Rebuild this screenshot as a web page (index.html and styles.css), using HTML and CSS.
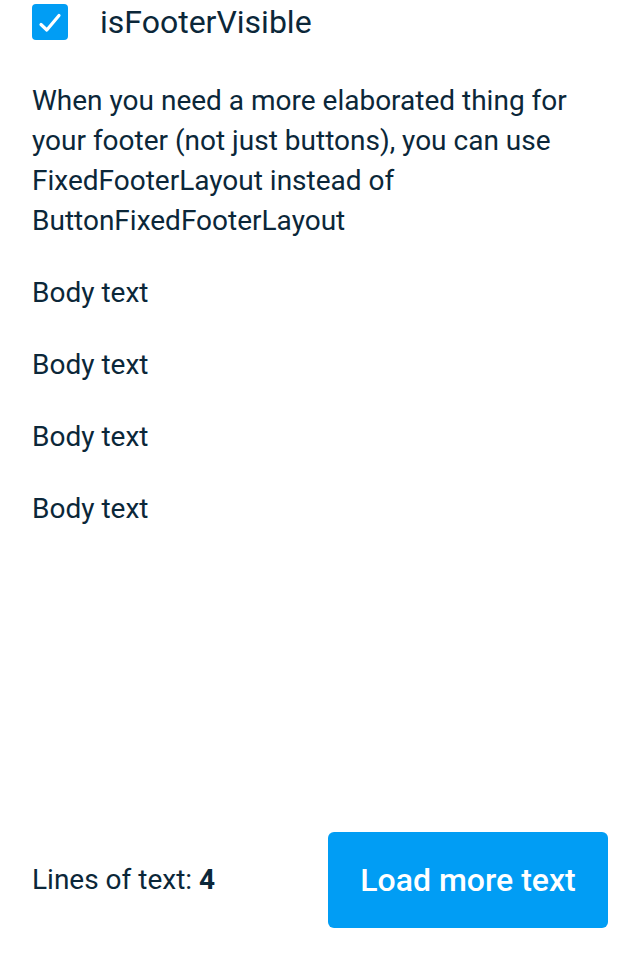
FILE: index.html
```html
<!DOCTYPE html>
<html lang="en">
<head>
<meta charset="utf-8">
<title>Fixed footer layout</title>
<link rel="stylesheet" href="styles.css">
</head>
<body>
<div class="page">
  <main class="content">
    <label class="check-row">
      <span class="checkbox">
        <svg width="36" height="36" viewBox="0 0 36 36" aria-hidden="true">
          <path d="M9 20.5 L14.8 26 L27 11.5" fill="none" stroke="#fff" stroke-width="3.2" stroke-linecap="round" stroke-linejoin="round"/>
        </svg>
      </span>
      <span class="check-label">isFooterVisible</span>
    </label>
    <p class="text">When you need a more elaborated thing for your footer (not just buttons), you can use FixedFooterLayout instead of ButtonFixedFooterLayout</p>
    <p class="text">Body text</p>
    <p class="text">Body text</p>
    <p class="text">Body text</p>
    <p class="text">Body text</p>
  </main>
  <footer class="footer">
    <span class="lines">Lines of text: <b>4</b></span>
    <button class="btn" type="button">Load more text</button>
  </footer>
</div>
</body>
</html>
```
FILE: styles.css
```css
* { box-sizing: border-box; }
html, body { margin: 0; padding: 0; }
body {
  font-family: Roboto, "Liberation Sans", sans-serif;
  color: #0b2739;
  background: #fff;
}
.page {
  height: 960px;
  display: flex;
  flex-direction: column;
  justify-content: space-between;
}
.content {
  padding: 4px 32px 0;
  display: flex;
  flex-direction: column;
  gap: 32px;
}
.check-row {
  display: flex;
  align-items: center;
  gap: 32px;
  height: 36px;
  margin-bottom: 9px;
}
.checkbox {
  width: 36px;
  height: 36px;
  border-radius: 4px;
  background: #019df4;
  display: block;
}
.checkbox svg { display: block; }
.check-label {
  font-size: 32px;
  line-height: 36px;
}
.text {
  margin: 0;
  font-size: 28px;
  line-height: 40px;
}
.footer {
  display: flex;
  align-items: center;
  justify-content: space-between;
  padding: 0 32px 32px;
}
.lines {
  font-size: 28px;
  line-height: 32px;
}
.lines b { font-weight: 700; }
.btn {
  width: 280px;
  height: 96px;
  border: 0;
  border-radius: 6px;
  background: #019df4;
  color: #fff;
  font-family: Roboto, "Liberation Sans", sans-serif;
  font-size: 32px;
  font-weight: 500;
  padding: 0;
}
```
